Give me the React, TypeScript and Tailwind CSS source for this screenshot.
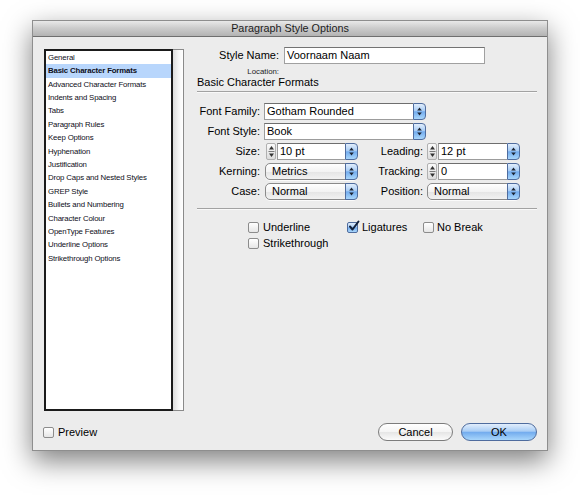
import React from "react";

const listItems = [
  "General",
  "Basic Character Formats",
  "Advanced Character Formats",
  "Indents and Spacing",
  "Tabs",
  "Paragraph Rules",
  "Keep Options",
  "Hyphenation",
  "Justification",
  "Drop Caps and Nested Styles",
  "GREP Style",
  "Bullets and Numbering",
  "Character Colour",
  "OpenType Features",
  "Underline Options",
  "Strikethrough Options",
];

const aqua =
  "bg-[linear-gradient(to_bottom,#e2eefc_0%,#a9cdf5_45%,#73acee_52%,#a8d6fb_100%)] border border-[#4f6c9e]";

function UpDown({ className = "" }: { className?: string }) {
  return (
    <svg width="5" height="9" viewBox="0 0 5 9" className={className} aria-hidden>
      <path d="M2.5 0.5 L4.8 3.5 L0.2 3.5 Z" fill="#1c2433" />
      <path d="M2.5 8.5 L4.8 5.5 L0.2 5.5 Z" fill="#1c2433" />
    </svg>
  );
}

function BlueTab() {
  return (
    <div className={`flex h-full w-[13px] items-center justify-center rounded-r-[4px] ${aqua}`}>
      <UpDown />
    </div>
  );
}

function Stepper() {
  return (
    <div className="mr-[1px] flex h-[17px] w-[10px] flex-col items-center justify-center rounded-[2px] bg-[linear-gradient(to_bottom,#fafafa,#dcdcdc)] border border-[#b0b0b0]">
      <svg width="7" height="13" viewBox="0 0 7 13" aria-hidden>
        <path d="M3.5 1 L6 4.5 L1 4.5 Z" fill="#333" />
        <line x1="0.5" y1="6.5" x2="6.5" y2="6.5" stroke="#7a7a7a" strokeWidth="1" />
        <path d="M3.5 12 L6 8.5 L1 8.5 Z" fill="#333" />
      </svg>
    </div>
  );
}

function Combo({ value, width }: { value: string; width: string }) {
  return (
    <div className={`flex h-[17px] ${width}`}>
      <div className="flex flex-1 items-center border border-[#9c9c9c] border-t-[#6e6e6e] border-r-0 bg-white pl-[2px] text-[11px] text-black">
        {value}
      </div>
      <BlueTab />
    </div>
  );
}

function Popup({ value, width }: { value: string; width: string }) {
  return (
    <div
      className={`flex h-[17px] ${width} rounded-[5px] border border-[#8a8a8a] bg-[linear-gradient(to_bottom,#ffffff,#f3f3f3_50%,#e4e4e4_51%,#f2f2f2)] shadow-[0_1px_0_rgba(255,255,255,0.8)]`}
    >
      <div className="flex flex-1 items-center pl-[6px] text-[11px] text-black">{value}</div>
      <div className="-my-[1px] -mr-[1px] h-[17px]">
        <BlueTab />
      </div>
    </div>
  );
}

function Check({ checked = false }: { checked?: boolean }) {
  return (
    <span
      className={`relative inline-block h-[11px] w-[11px] shrink-0 rounded-[2px] ${
        checked
          ? aqua
          : "border border-[#8c8c8c] bg-[linear-gradient(to_bottom,#ffffff,#e6e6e6)]"
      }`}
    >
      {checked && (
        <svg width="12" height="12" viewBox="0 0 12 12" className="absolute -top-[3px] left-[0px]" aria-hidden>
          <path d="M2 6.5 L4.5 9.5 L10.5 1.5" fill="none" stroke="#12203a" strokeWidth="2" strokeLinecap="round" strokeLinejoin="round" />
        </svg>
      )}
    </span>
  );
}

export default function App() {
  return (
    <div className="min-h-[495px] w-[580px] bg-white pl-[32px] pt-[20px] font-['Liberation_Sans',Arial,sans-serif] text-black">
      <div className="flex h-[431px] w-[516px] flex-col border border-[#8e8e8e] bg-[#ececec] shadow-[0_10px_26px_rgba(0,0,0,0.5)]">
        {/* title bar */}
        <div className="flex h-[16px] items-center justify-center border-b border-[#6f6f6f] bg-[linear-gradient(to_bottom,#e9e9e9,#cdcdcd_45%,#b3b3b3)] text-[10.8px] leading-none text-[#1c1c1c]">
          Paragraph Style Options
        </div>

        <div className="flex flex-1 flex-col pl-[11px] pr-[10px] pt-[10px]">
          <div className="flex">
            {/* category list */}
            <div className="mt-[2px] flex h-[362px] w-[140px]">
              <div className="w-[129px] border-2 border-[#1b1b1b] bg-white">
                {listItems.map((item, i) => (
                  <div
                    key={item}
                    className={`flex h-[13.4px] items-center pl-[2px] text-[7.8px] tracking-[-0.15px] text-[#0e0e18] ${
                      i === 1 ? "bg-[#b8d6fc] font-bold" : ""
                    }`}
                  >
                    {item}
                  </div>
                ))}
              </div>
              <div className="w-[11px] border border-l-0 border-[#8a8a8a] bg-[linear-gradient(to_right,#dcdcdc,#f7f7f7_60%,#ffffff)]" />
            </div>

            {/* right panel */}
            <div className="ml-[13px] flex w-[340px] flex-col text-[11px]">
              <div className="flex h-[17px] items-center">
                <span className="w-[82px] text-right">Style Name:</span>
                <div className="ml-[5px] flex h-[17px] w-[201px] items-center border border-[#a0a0a0] border-t-[#737373] bg-white pl-[2px]">
                  Voornaam Naam
                </div>
              </div>
              <div className="flex h-[12px] items-end">
                <span className="w-[82px] text-right text-[7.8px] leading-none text-[#222]">Location:</span>
              </div>
              <div className="flex h-[16px] items-end border-b border-[#a2a2a2] pb-[1px] text-[11px]">
                Basic Character Formats
              </div>
              <div className="h-[1px] bg-white/70" />

              <div className="mt-[10px] flex flex-col gap-[3px]">
                <div className="flex h-[17px] items-center">
                  <span className="w-[63px] text-right">Font Family:</span>
                  <div className="ml-[4px]">
                    <Combo value="Gotham Rounded" width="w-[162px]" />
                  </div>
                </div>
                <div className="flex h-[17px] items-center">
                  <span className="w-[63px] text-right">Font Style:</span>
                  <div className="ml-[4px]">
                    <Combo value="Book" width="w-[162px]" />
                  </div>
                </div>
                <div className="flex h-[17px] items-center">
                  <span className="w-[63px] text-right">Size:</span>
                  <div className="ml-[6px] flex">
                    <Stepper />
                    <Combo value="10 pt" width="w-[81px]" />
                  </div>
                  <span className="w-[65px] text-right">Leading:</span>
                  <div className="ml-[4px] flex">
                    <Stepper />
                    <Combo value="12 pt" width="w-[82px]" />
                  </div>
                </div>
                <div className="flex h-[17px] items-center">
                  <span className="w-[63px] text-right">Kerning:</span>
                  <div className="ml-[5px]">
                    <Popup value="Metrics" width="w-[93px]" />
                  </div>
                  <span className="w-[65px] text-right">Tracking:</span>
                  <div className="ml-[4px] flex">
                    <Stepper />
                    <Combo value="0" width="w-[82px]" />
                  </div>
                </div>
                <div className="flex h-[17px] items-center">
                  <span className="w-[63px] text-right">Case:</span>
                  <div className="ml-[5px]">
                    <Popup value="Normal" width="w-[93px]" />
                  </div>
                  <span className="w-[65px] text-right">Position:</span>
                  <div className="ml-[4px]">
                    <Popup value="Normal" width="w-[93px]" />
                  </div>
                </div>
              </div>

              <div className="mt-[8px] h-[1px] bg-[#a2a2a2]" />
              <div className="h-[1px] bg-white/70" />

              <div className="mt-[9px] flex flex-col pl-[51px]">
                <div className="flex h-[16px] items-center">
                  <label className="flex w-[99px] items-center gap-[4px]">
                    <Check />
                    <span>Underline</span>
                  </label>
                  <label className="flex w-[76px] items-center gap-[4px]">
                    <Check checked />
                    <span>Ligatures</span>
                  </label>
                  <label className="flex items-center gap-[3px]">
                    <Check />
                    <span>No Break</span>
                  </label>
                </div>
                <div className="flex h-[16px] items-center">
                  <label className="flex items-center gap-[4px]">
                    <Check />
                    <span>Strikethrough</span>
                  </label>
                </div>
              </div>
            </div>
          </div>

          {/* footer */}
          <div className="mt-[12px] flex h-[18px] items-center text-[11px]">
            <label className="-ml-[1px] flex items-center gap-[4px]">
              <Check />
              <span>Preview</span>
            </label>
            <div className="ml-auto flex gap-[8px]">
              <button className="h-[18px] w-[75px] rounded-full border border-[#7c7c7c] bg-[linear-gradient(to_bottom,#ffffff,#f4f4f4_50%,#e6e6e6_52%,#fbfbfb)] text-[11px] leading-none">
                Cancel
              </button>
              <button className={`h-[18px] w-[76px] rounded-full text-[11px] leading-none ${aqua}`}>
                OK
              </button>
            </div>
          </div>
        </div>
      </div>
    </div>
  );
}
